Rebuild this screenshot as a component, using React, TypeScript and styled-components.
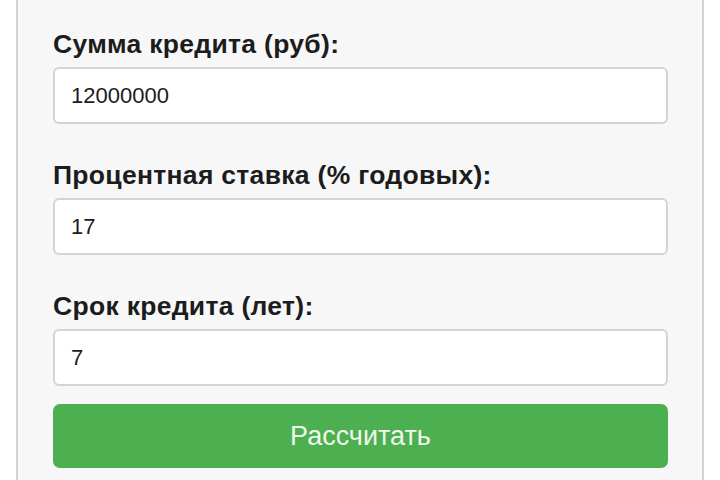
import React from "react";
import styled, { createGlobalStyle } from "styled-components";

const Global = createGlobalStyle`
  html, body { margin: 0; padding: 0; background: #ffffff; }
  body { font-family: "Liberation Sans", Arial, sans-serif; overflow: hidden; }
`;

const Page = styled.div`
  width: 720px;
  height: 480px;
  overflow: hidden;
  background: #ffffff;
`;

const Panel = styled.form`
  box-sizing: border-box;
  margin: -4px 0 0 16px;
  width: 688px;
  padding: 30px 34px 40px 35px;
  background: #f7f7f7;
  border: 2px solid #d2d2d2;
  border-radius: 4px;
  display: flex;
  flex-direction: column;
`;

const Field = styled.div`
  display: flex;
  flex-direction: column;
  & + & {
    margin-top: 35px;
  }
`;

const Label = styled.label`
  font-size: 26.5px;
  font-weight: 700;
  color: #1c1c1c;
  line-height: 32px;
  margin-bottom: 7px;
  letter-spacing: 0.3px;
`;

const Input = styled.input`
  box-sizing: border-box;
  height: 57px;
  width: 100%;
  padding: 0 16px;
  font-family: "Liberation Sans", Arial, sans-serif;
  font-size: 22px;
  color: #1c1c1c;
  background: #ffffff;
  border: 2px solid #d4d4d4;
  border-radius: 6px;
  outline: none;
`;

const Button = styled.button`
  height: 64px;
  width: 100%;
  margin-top: 18px;
  border: none;
  border-radius: 7px;
  background: #4caf50;
  color: #eef7ea;
  font-family: "Liberation Sans", Arial, sans-serif;
  font-size: 27px;
  cursor: pointer;
`;

const fields = [
  { label: "Сумма кредита (руб):", value: "12000000" },
  { label: "Процентная ставка (% годовых):", value: "17" },
  { label: "Срок кредита (лет):", value: "7" },
];

export default function App() {
  return (
    <Page>
      <Global />
      <Panel onSubmit={(e) => e.preventDefault()}>
        {fields.map((f) => (
          <Field key={f.label}>
            <Label>{f.label}</Label>
            <Input defaultValue={f.value} />
          </Field>
        ))}
        <Button type="submit">Рассчитать</Button>
      </Panel>
    </Page>
  );
}
